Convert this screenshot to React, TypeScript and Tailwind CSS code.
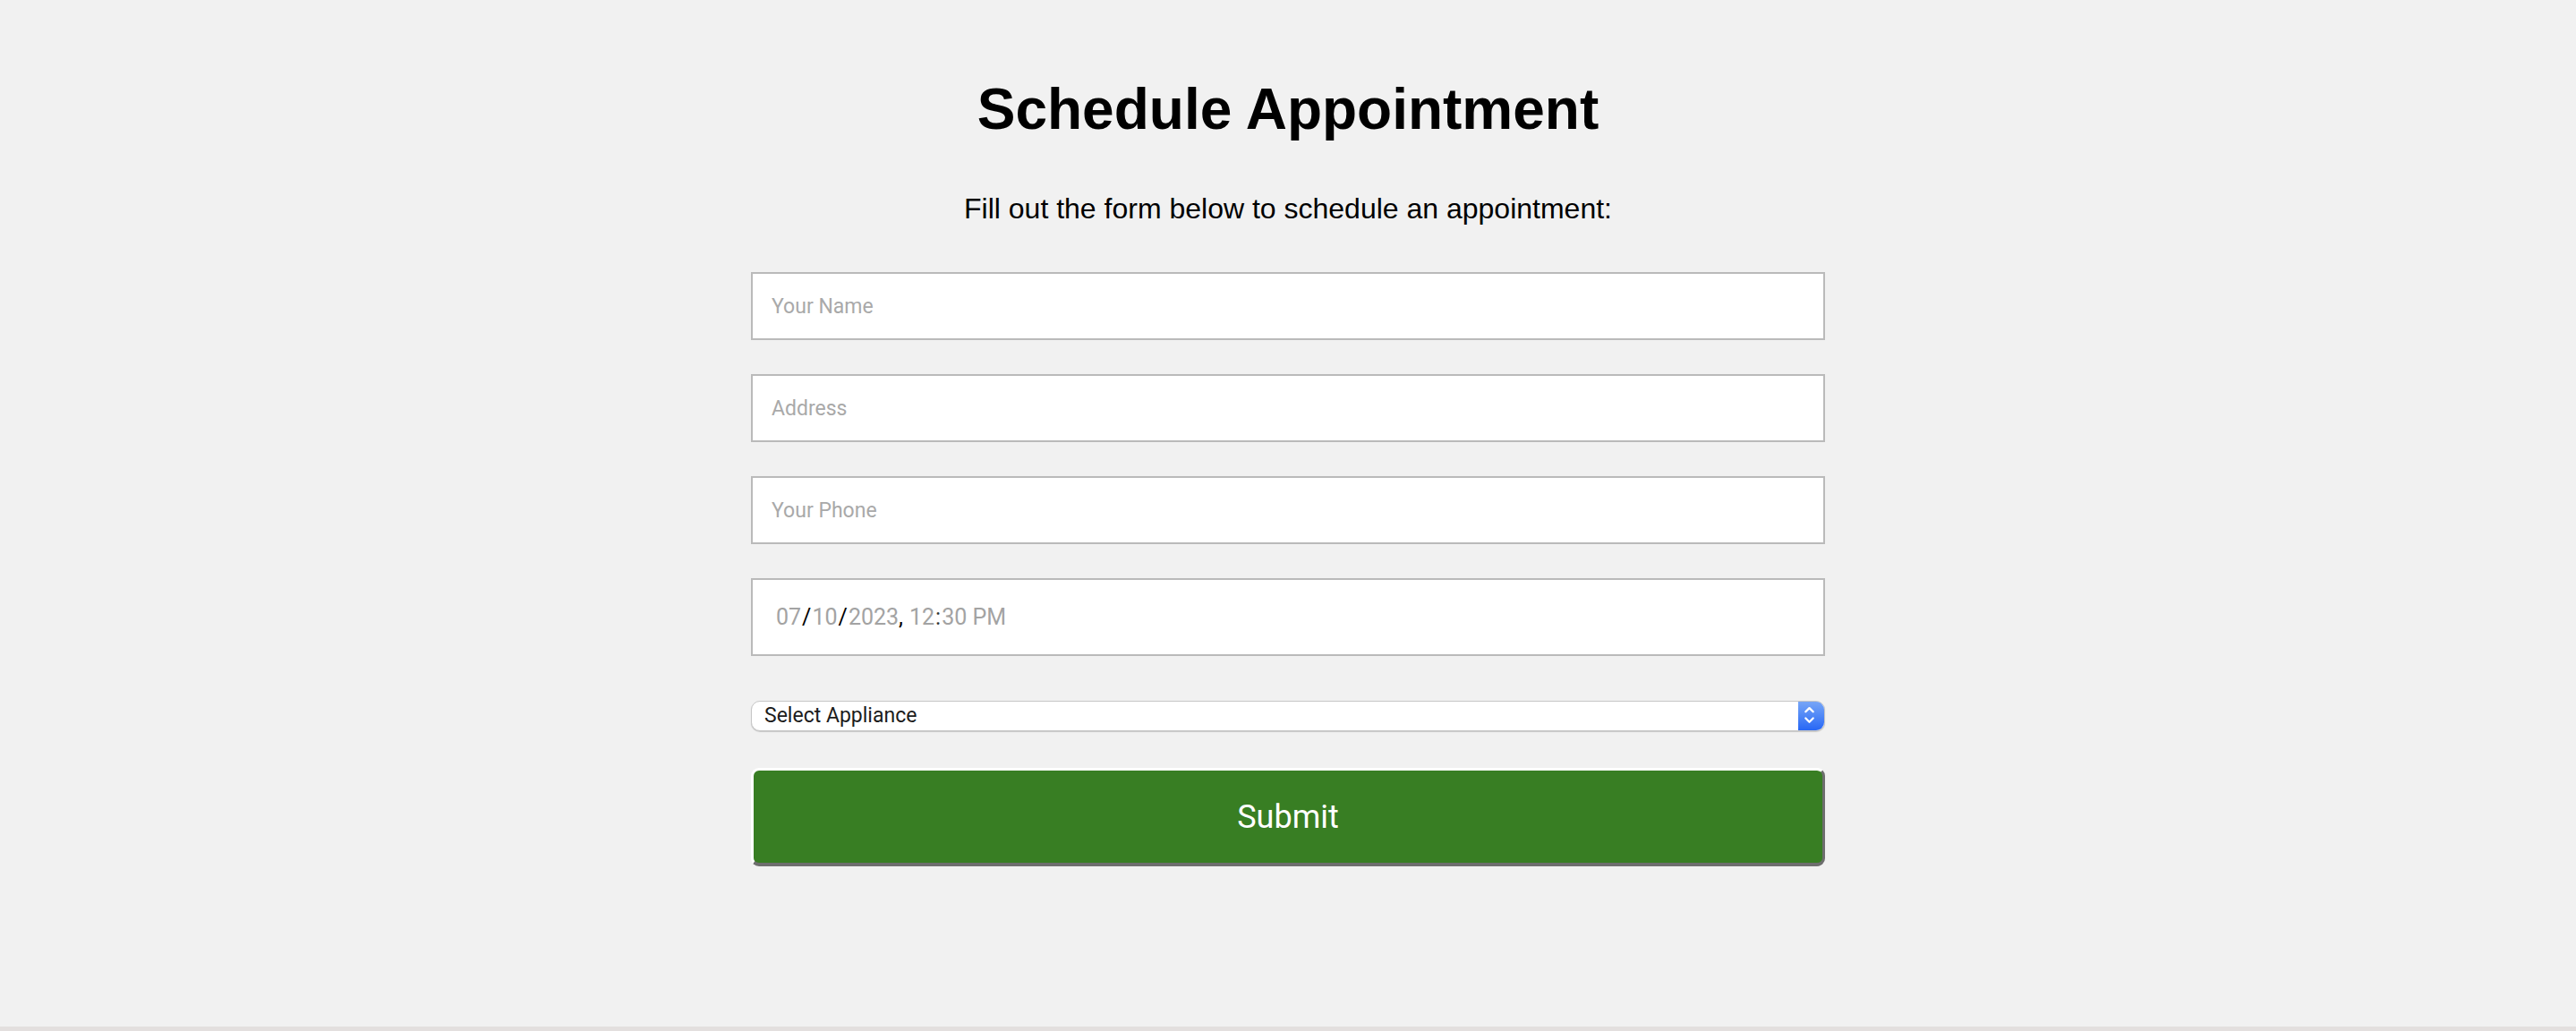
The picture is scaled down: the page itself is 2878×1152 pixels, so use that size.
import React from 'react';

const fieldFont = { fontFamily: 'Roboto, "Liberation Sans", sans-serif' };

const TextField: React.FC<{ placeholder: string }> = ({ placeholder }) => (
    <input
        type="text"
        placeholder={placeholder}
        style={fieldFont}
        className="block w-full h-[76px] bg-white border-2 border-[#bababa] px-[21px] text-[23px] text-[#222] placeholder:text-[#a9a9a9] outline-none"
    />
);

const Chevrons: React.FC = () => (
    <svg width="29" height="32" viewBox="0 0 29 32" fill="none" stroke="white" strokeWidth="2.3" strokeLinecap="round" strokeLinejoin="round">
        <path d="M8.3 11.3 L12.5 7.1 L16.7 11.3" />
        <path d="M8.3 18.5 L12.5 22.7 L16.7 18.5" />
    </svg>
);

export default function App() {
    return (
        <div className="h-[1152px] bg-[#f1f1f1] flex flex-col">
            <div className="flex-1">
                <div className="w-[1200px] mx-auto pt-[85px]">
                    <h1
                        className="text-center text-[64px] leading-[74px] font-bold text-black"
                        style={{ fontFamily: '"Liberation Sans", Arial, sans-serif' }}
                    >
                        Schedule Appointment
                    </h1>
                    <p
                        className="mt-[56px] text-center text-[32px] leading-[37px] text-black"
                        style={{ fontFamily: '"Liberation Sans", Arial, sans-serif' }}
                    >
                        Fill out the form below to schedule an appointment:
                    </p>

                    <form className="mt-[52px] flex flex-col" onSubmit={(e) => e.preventDefault()}>
                        <div className="flex flex-col gap-[38px]">
                            <TextField placeholder="Your Name" />
                            <TextField placeholder="Address" />
                            <TextField placeholder="Your Phone" />

                            {/* datetime field */}
                            <div
                                style={fieldFont}
                                className="h-[87px] bg-white border-2 border-[#bababa] pl-[26px] flex items-center text-[25px] text-[#a3a3a3]"
                            >
                                <span>07</span>
                                <span className="text-black mx-[1px]">/</span>
                                <span>10</span>
                                <span className="text-black mx-[1px]">/</span>
                                <span>2023</span>
                                <span className="text-black">,</span>
                                <span className="ml-[7px]">12</span>
                                <span className="text-[#333] mx-[1px]">:</span>
                                <span>30 PM</span>
                            </div>
                        </div>

                        {/* appliance select */}
                        <div className="mt-[50px] h-[34px] flex rounded-[10px] bg-white border border-[#c6c6c6] shadow-[0_1px_1px_rgba(0,0,0,0.18)] overflow-hidden">
                            <div
                                style={fieldFont}
                                className="flex-1 flex items-center pl-[14px] text-[23px] text-[#1c1c1c]"
                            >
                                Select Appliance
                            </div>
                            <div className="w-[29px] flex items-center justify-center bg-gradient-to-b from-[#77a5f6] to-[#2766f5]">
                                <Chevrons />
                            </div>
                        </div>

                        <button
                            type="submit"
                            style={fieldFont}
                            className="mt-[41px] h-[110px] w-full rounded-[9px] border-[3px] border-t-white border-l-white border-r-[#6e6e6e] border-b-[#6e6e6e] border-b-[4px] bg-[#387e23] text-white text-[36px]"
                        >
                            Submit
                        </button>
                    </form>
                </div>
            </div>
            <div className="h-[5px] bg-[#e3dfde]" />
        </div>
    );
}
